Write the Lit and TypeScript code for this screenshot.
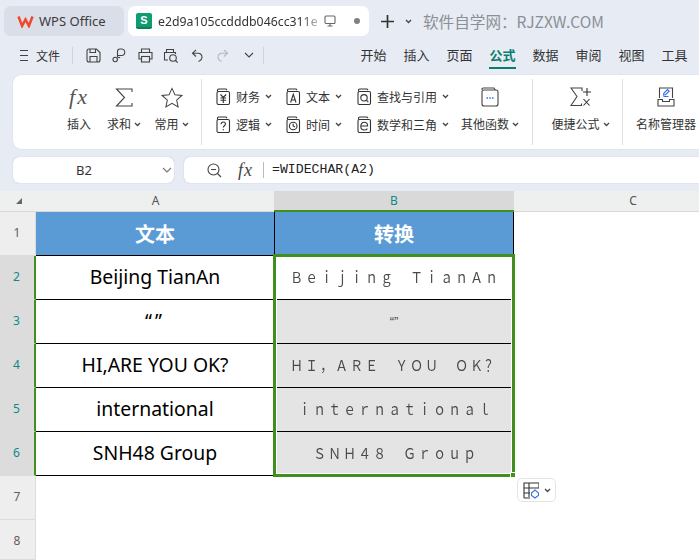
import { LitElement, html, css, svg } from "lit";
import { customElement } from "lit/decorators.js";

const ic = (w: number, h: number, body: unknown, cls = "") =>
  html`<svg class="ic ${cls}" width=${w} height=${h} viewBox="0 0 ${w} ${h}" fill="none" stroke="currentColor" stroke-width="1.1">${body}</svg>`;

const caret = html`<svg class="caret" width="7" height="5" viewBox="0 0 7 5" fill="none" stroke="currentColor" stroke-width="1.3"><path d="M1 1l2.5 2.5L6 1"/></svg>`;

const folder = (inner: unknown) => ic(15, 17, svg`
  <path d="M1.5 3.5V2.2Q1.5 1 2.7 1H10L11 2.2"/>
  <rect x="1" y="3.5" width="12.5" height="13" rx="1.5"/>${inner}`);

const smallIcons: Record<string, unknown> = {
  money: folder(svg`<path d="M4.5 6.5l2.8 3 2.8-3M4.5 10h5.6M4.5 12.3h5.6M7.3 9.5V15"/>`),
  text: folder(svg`<path d="M4.6 14.5L7.3 6.3 10 14.5M5.5 12h3.6"/>`),
  search: folder(svg`<circle cx="7" cy="9.8" r="3.2"/><path d="M9.3 12.2l2 2"/>`),
  logic: folder(svg`<path d="M5 8.2Q5.3 6 7.3 6q2.2 0 2.2 2c0 1.7-2.2 1.8-2.2 3.6"/><path d="M7.3 13v1.3"/>`),
  time: folder(svg`<circle cx="7.2" cy="10" r="3.8"/><path d="M7.2 7.8V10l1.8.9"/>`),
  math: folder(svg`<path d="M3.8 10h6.8c0-2.2-1.3-3.7-3.4-3.7S3.8 8 3.8 10.2s1.5 3.8 3.5 3.8c1.4 0 2.4-.5 3.1-1.4"/>`),
};

const rowsA = ["Beijing TianAn", "“”", "HI,ARE YOU OK?", "international", "SNH48 Group"];
const rowsB = ["Ｂｅｉｊｉｎｇ　ＴｉａｎＡｎ", "“”", "ＨＩ，ＡＲＥ　ＹＯＵ　ＯＫ？", "ｉｎｔｅｒｎａｔｉｏｎａｌ", "ＳＮＨ４８　Ｇｒｏｕｐ"];

@customElement("app-root")
export class AppRoot extends LitElement {
  static styles = css`
    :host { display: block; width: 699px; height: 560px; overflow: hidden; background: #fff;
      font-family: "Noto Sans CJK SC", "Noto Sans", sans-serif; color: #333; }
    .ic { display: block; flex: none; }
    .caret { display: block; flex: none; color: #444; }
    .chrome { background: #e7ebf3; height: 191px; overflow: hidden; }

    .tabs { display: flex; align-items: center; height: 30px; padding: 6px 0 0 4px; }
    .tab { height: 30px; box-sizing: border-box; display: flex; align-items: center; border-radius: 7px; }
    .tab-home { width: 120px; background: #d9dee8; padding-left: 13px; gap: 5px; font: 13px "Noto Sans", sans-serif; color: #3c3c3c; }
    .tab-file { width: 241px; margin-left: 4px; background: #fff; padding-left: 8px; color: #333; }
    .sheet { width: 16px; height: 16px; border-radius: 2px; background: #0f9d6f; color: #fff; font: bold 11px/14px "Liberation Sans", sans-serif; text-align: center; border-bottom: 2px solid #0a7f58; box-sizing: border-box; flex: none; }
    .title { width: 162px; margin-left: 6px; font: 12.3px "Noto Sans", sans-serif; white-space: nowrap; flex: none;
      -webkit-mask-image: linear-gradient(90deg, #000 88%, rgba(0,0,0,.25)); }
    .monitor { margin-left: 4px; color: #666; }
    .dot { width: 6px; height: 6px; border-radius: 50%; background: #808080; margin-left: 18px; flex: none; }
    .plus { margin-left: 11px; color: #333; }
    .tab-caret { margin-left: 10px; }
    .site { margin-left: 11px; font-size: 15.6px; color: #8b8f96; white-space: nowrap; }

    .menu { display: flex; align-items: center; height: 28px; margin-top: 6px; padding: 0 0 2px 20px; box-sizing: border-box; }
    .file { font-size: 12px; margin-left: 8px; width: 36px; color: #333; }
    .vline { width: 1px; height: 17px; background: #cfd3da; flex: none; }
    .tools { display: flex; margin-left: 7px; width: 183px; }
    .tools > span { width: 26px; display: flex; justify-content: center; align-items: center; color: #444; }
    .tools > .off { color: #b5b8bd; }
    .menus { display: flex; margin: 0 0 -2px 88px; }
    .menus span { width: 43px; height: 28px; box-sizing: border-box; text-align: center; font-size: 13px; line-height: 25px; color: #333; position: relative; }
    .menus .on { color: #0a7d6e; font-weight: 700; }
    .menus .on::after { content: ""; position: absolute; left: 8px; right: 8px; bottom: 1px; height: 2px; background: #0a7d6e; }

    .ribbon { display: flex; height: 74px; margin: 5px 0 0 13px; background: #fff; border-radius: 8px 0 0 8px; padding-left: 44px; box-shadow: 0 0 1px #b8bcc4; font-size: 12px; color: #333; white-space: nowrap; }
    .big { display: flex; flex-direction: column; align-items: center; padding-top: 9px; flex: none; box-sizing: border-box; }
    .big .glyph { height: 26px; display: flex; align-items: center; justify-content: center; color: #444; }
    .big .label { display: flex; align-items: center; gap: 3px; margin-top: 5px; line-height: 18px; }
    .w44 { width: 44px; } .w46 { width: 46px; } .w49 { width: 49px; } .w70 { width: 70px; } .w86 { width: 86px; }
    .w89p { width: 89px; padding-left: 6px; }
    .sep { width: 1px; height: 66px; margin-top: 4px; background: #dcdfe4; flex: none; }
    .sep1 { margin-left: 5px; }
    .sep2 { margin: 4px 0 0 7px; }
    .stack { display: grid; grid-template-rows: 28px 28px; padding-top: 7px; flex: none; }
    .st1 { width: 70px; margin-left: 14px; } .st2 { width: 71px; } .st3 { width: 98px; }
    .small { display: flex; align-items: center; color: #333; }
    .small .name { margin-left: 5px; margin-right: 5px; }
    .fx { font: italic 22px "Liberation Serif", serif; color: #555; letter-spacing: 2px; }
    .star { width: 22px; height: 21px; }

    .formula { display: flex; height: 26px; margin-top: 8px; padding-left: 13px; gap: 10px; }
    .namebox { width: 161px; box-sizing: border-box; height: 26px; background: #fff; border-radius: 6px; box-shadow: 0 0 1px #9ea3ab; display: flex; align-items: center; font: 13px "Noto Sans", sans-serif; color: #333; padding-left: 63px; flex: none; }
    .namebox .nm { width: 86px; }
    .fbox { flex: 1; height: 26px; background: #fff; border-radius: 6px 0 0 6px; box-shadow: 0 0 1px #9ea3ab; display: flex; align-items: center; padding-left: 23px; color: #444; }
    .fbox .fx2 { font: italic 18px "Liberation Serif", serif; margin-left: 16px; width: 21px; letter-spacing: 1px; }
    .fbox .bar { width: 1px; height: 16px; background: #bbb; margin-left: 4px; }
    .fbox .code { margin-left: 8px; font: 13.2px/26px "Liberation Mono", monospace; color: #222; }

    .sheetwrap { position: relative; height: 369px; background: #fff; }
    .grid { display: grid; grid-template-columns: 36px 239px 239px 238px; grid-template-rows: 21px repeat(7, 44px) 40px; }
    .corner { background: #eeefef; border-bottom: 1px solid #d8d8d8; box-sizing: border-box; position: relative; }
    .corner::after { content: ""; position: absolute; left: 16px; top: 7px; border-style: solid; border-width: 0 0 6px 6px; border-color: transparent transparent #666 transparent; }
    .ch { background: #eeefef; border-bottom: 1px solid #d8d8d8; box-sizing: border-box; text-align: center; font: 12px/20px "Noto Sans", sans-serif; color: #555; }
    .ch.sel { background: #d9d9d9; color: #0b8a8a; border-bottom: 2px solid #41901f; margin-left: -1px; }
    .rh { background: #eeeeee; border-bottom: 1px solid #dcdcdc; border-right: 1px solid #dcdcdc; box-sizing: border-box; text-align: center; font: 12px/42px "Noto Sans", sans-serif; color: #6a5a5a; padding-right: 1px; }
    .rh.sel { background: #dcdcdc; color: #0b8a8a; border-right: 2px solid #41901f; }
    .c { box-sizing: border-box; display: flex; align-items: center; justify-content: center; font: 19.4px "Noto Sans", sans-serif; color: #000; border-bottom: 1px solid #000; white-space: nowrap; padding-bottom: 2px; }
    .hd { background: #5b9bd5; color: #fff; font: 700 20px "Noto Sans CJK SC", sans-serif; border-right: 1px solid #000; padding-bottom: 0; }
    .a { border-right: 1px solid #000; }
    .a.q { letter-spacing: 3px; }
    .b { font: 15px "Noto Sans CJK SC", sans-serif; color: #4a4a4a; border-right: 1px solid #000; }
    .b.fill { background: #e4e4e4; }
    .b.sm { font: 13px "Liberation Sans", sans-serif; padding-bottom: 0; }
    .ch15 { display: inline-block; width: 15px; text-align: center; transform: scaleX(0.85); }
    .blank { background: #fff; }
    .selection { position: absolute; left: 273px; top: 63px; width: 242px; height: 223px; box-sizing: border-box; border: 3px solid #41901f; box-shadow: inset 0 0 0 1px #fff; pointer-events: none; }
    .handle { position: absolute; left: 510px; top: 281px; width: 6px; height: 6px; box-sizing: border-box; background: #41901f; border: 1px solid #fff; }
    .paste { position: absolute; left: 517px; top: 287px; width: 39px; height: 24px; box-sizing: border-box; background: #fff; border: 1px solid #e4e4e4; border-radius: 5px; display: flex; align-items: center; padding-left: 5px; gap: 5px; color: #333; }
  `;

  private big(cls: string, glyph: unknown, label: string, hasCaret: boolean) {
    return html`<div class="big ${cls}"><div class="glyph">${glyph}</div><div class="label">${label}${hasCaret ? caret : ""}</div></div>`;
  }

  private small(icon: string, name: string) {
    return html`<div class="small">${smallIcons[icon]}<span class="name">${name}</span>${caret}</div>`;
  }

  private wide(text: string, plain: boolean) {
    if (plain) return text;
    return html`${[...text].map((c) => html`<span class="ch15">${c}</span>`)}`;
  }

  render() {
    const menus = ["开始", "插入", "页面", "公式", "数据", "审阅", "视图", "工具"];
    return html`
      <div class="chrome">
        <div class="tabs">
          <div class="tab tab-home">
            ${ic(17, 13, svg`<path d="M1.500 1.500l3.600 9.500L8.500 4.500l3.400 6.500 3.600-9.500" stroke="#f0482d" stroke-width="2.500" stroke-linejoin="miter"/>`)}
            <span>WPS Office</span>
          </div>
          <div class="tab tab-file">
            <div class="sheet">S</div>
            <span class="title">e2d9a105ccdddb046cc311e</span>
            <span class="monitor">${ic(12, 12, svg`<rect x="1" y="1" width="10" height="7.5" rx="1"/><path d="M3.5 11h5M6 8.5V11"/>`)}</span>
            <span class="dot"></span>
          </div>
          <span class="plus">${ic(15, 15, svg`<path d="M7.5 1v13M1 7.5h13" stroke-width="1.7"/>`)}</span>
          <span class="tab-caret">${caret}</span>
          <span class="site">软件自学网：RJZXW.COM</span>
        </div>

        <div class="menu">
          ${ic(8, 11, svg`<path d="M0 .5h8M0 5.5h8M0 10.5h8" stroke="#444"/>`)}
          <span class="file">文件</span>
          <span class="vline"></span>
          <div class="tools">
            <span>${ic(15, 15, svg`<path d="M1 3q0-2 2-2h7.5L14 4.5V12q0 2-2 2H3q-2 0-2-2zM4 1v3.5h5.5V1M4 14V8.5h7V14"/>`)}</span>
            <span>${ic(14, 15, svg`<path d="M5.500 9V3.500Q5.500 1 8 1h1.500a3 3 0 010 6.500H6"/><circle cx="3.200" cy="11.500" r="2.200"/><path d="M5.500 9.500h2.700"/>`)}</span>
            <span>${ic(15, 15, svg`<path d="M3.500 4.500V1h8v3.500M3.500 11H1V4.500h13V11h-2.500"/><rect x="3.500" y="8.500" width="8" height="5.500"/>`)}</span>
            <span>${ic(16, 15, svg`<path d="M3.500 4.500V1.500h7v3M5 12H1.500V4.500h11v1.500"/><circle cx="10" cy="10" r="3.300"/><path d="M12.500 12.500l2.200 2.200"/>`)}</span>
            <span>${ic(12, 13, svg`<path d="M5 1L1.500 4.200 5 7.500M1.500 4.200h5.500a3.800 3.800 0 014 3.800c0 2-1.200 3.500-3.500 4.500"/>`)}</span>
            <span class="off">${ic(12, 13, svg`<path d="M7 1l3.500 3.200L7 7.500M10.500 4.200H5a3.800 3.800 0 00-4 3.800c0 2 1.200 3.500 3.500 4.500"/>`)}</span>
            <span>${ic(10, 6, svg`<path d="M1 1l4 4 4-4"/>`)}</span>
          </div>
          <span class="vline"></span>
          <div class="menus">
            ${menus.map((m) => html`<span class=${m === "公式" ? "on" : ""}>${m}</span>`)}
          </div>
        </div>

        <div class="ribbon">
          ${this.big("w44", html`<span class="fx">fx</span>`, "插入", false)}
          ${this.big("w46", ic(19, 19, svg`<path d="M17 4V1H1.500l8 8.500-8 8.500H17v-3"/>`), "求和", true)}
          ${this.big("w49", ic(24, 23, svg`<path d="M12 1.500l3.200 7 7.600.800-5.700 5.100 1.600 7.500L12 18l-6.700 3.900 1.600-7.500L1.200 9.300l7.600-.800z"/>`, "star"), "常用", true)}
          <span class="sep sep1"></span>
          <div class="stack st1">${this.small("money", "财务")}${this.small("logic", "逻辑")}</div>
          <div class="stack st2">${this.small("text", "文本")}${this.small("time", "时间")}</div>
          <div class="stack st3">${this.small("search", "查找与引用")}${this.small("math", "数学和三角")}</div>
          ${this.big("w70", ic(18, 20, svg`<path d="M1 3V2.200Q1 1 2.200 1H13l1.200 2"/><rect x="1" y="3" width="16" height="16" rx="2"/><path d="M5.500 11h1.500M8.300 11h1.500M11 11h1.500" stroke="#2f6fed" stroke-width="1.500"/>`), "其他函数", true)}
          <span class="sep sep2"></span>
          ${this.big("w89p", ic(21, 20, svg`<path d="M12 4V1H1l6 8.500L1 18.500h10.500v-2"/><path d="M17 1v8M13 5h8M13.500 12l6 6.500M19.500 12l-6 6.500" stroke="#333"/>`), "便捷公式", true)}
          <span class="sep"></span>
          ${this.big("w86", ic(18, 20, svg`<path d="M2.500 11V1h13v10"/><path d="M1 12.500h4.500v2h7v-2H17V19H1z"/><path d="M6.500 9.500H11.500M6.500 8l.5-2 3.500-3.500 1.700 1.700L8.500 7.700z" stroke="#2f6fed"/>`), "名称管理器", false)}
        </div>

        <div class="formula">
          <div class="namebox">
            <span class="nm">B2</span>
            ${ic(10, 6, svg`<path d="M1 1l4 4 4-4" stroke="#777"/>`)}
          </div>
          <div class="fbox">
            ${ic(15, 15, svg`<circle cx="6.500" cy="6.500" r="5.500"/><path d="M4 6.500h5M10.500 10.500l3.500 3.500"/>`)}
            <span class="fx2">fx</span>
            <span class="bar"></span>
            <span class="code">=WIDECHAR(A2)</span>
          </div>
        </div>
      </div>

      <div class="sheetwrap">
        <div class="grid">
          <div class="corner"></div><div class="ch">A</div><div class="ch sel">B</div><div class="ch">C</div>
          <div class="rh">1</div><div class="c hd">文本</div><div class="c hd">转换</div><div class="blank"></div>
          ${rowsA.map((t, i) => html`
            <div class="rh sel">${i + 2}</div>
            <div class="c a ${i === 1 ? "q" : ""}">${t}</div>
            <div class="c b ${i > 0 ? "fill" : ""} ${i === 1 ? "sm" : ""}">${this.wide(rowsB[i], i === 1)}</div>
            <div class="blank"></div>`)}
          <div class="rh">7</div><div></div><div></div><div></div>
          <div class="rh">8</div><div></div><div></div><div></div>
        </div>
        <div class="selection"></div>
        <div class="handle"></div>
        <div class="paste">
          ${ic(16, 17, svg`<path d="M1 16V1h15v5M1 6h15M1 11h6M6 1v14M1 16h6"/><path d="M8.500 11l3.500-3 3.500 3v2.500L12 16l-3.500-2.500z" stroke="#3a6fe8"/>`)}
          ${caret}
        </div>
      </div>
    `;
  }
}
